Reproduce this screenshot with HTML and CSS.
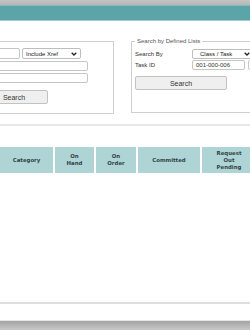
FILE: index.html
```html
<!DOCTYPE html>
<html>
<head>
<meta charset="utf-8">
<link rel="stylesheet" href="styles.css">
</head>
<body>
<div class="topbar"></div>
<div class="titlebar"></div>

<div class="viewport">
<div class="search-row">
  <fieldset class="panel panel-left">
    <legend class="legend-blank"></legend>
    <div class="left-stack">
      <div class="field-row">
        <span class="input input-short"></span>
        <span class="select select-xref"><span class="select-text">Include Xref</span><svg class="chev" viewBox="0 0 6 4" width="6" height="4"><path d="M0.7 0.7 L3 3 L5.3 0.7" fill="none" stroke="#222" stroke-width="1.3"/></svg></span>
      </div>
      <span class="input input-long"></span>
      <span class="input input-long"></span>
      <button class="btn btn-left">Search</button>
    </div>
  </fieldset>

  <fieldset class="panel panel-right">
    <legend>Search by Defined Lists</legend>
    <div class="form-grid right-grid">
      <span class="label">Search By</span>
      <span class="select select-class"><span class="select-text">Class / Task</span><svg class="chev" viewBox="0 0 6 4" width="6" height="4"><path d="M0.7 0.7 L3 3 L5.3 0.7" fill="none" stroke="#222" stroke-width="1.3"/></svg></span>
      <span class="label">Task ID</span>
      <div class="field-row">
        <span class="input input-task">001-000-006</span>
        <span class="input input-mini"></span>
      </div>
    </div>
    <button class="btn btn-right">Search</button>
  </fieldset>
</div>
</div>

<div class="divider"></div>

<div class="table-area">
  <div class="thead">
    <div class="th c1">Category</div>
    <div class="th c2">On<br>Hand</div>
    <div class="th c3">On<br>Order</div>
    <div class="th c4">Committed</div>
    <div class="th c5">Request<br>Out<br>Pending</div>
  </div>
</div>

<div class="footer-line"></div>
<div class="bottombar"></div>
</body>
</html>
```

FILE: styles.css
```css
html, body {
  margin: 0;
  padding: 0;
}
body {
  width: 250px;
  height: 330px;
  overflow: hidden;
  background: #ffffff;
  font-family: "Liberation Sans", Arial, sans-serif;
  color: #333;
  display: flex;
  flex-direction: column;
}
.topbar {
  height: 5px;
  background: linear-gradient(#c4c4c4, #b6b6b6);
  flex: none;
}
.titlebar {
  height: 14px;
  background: #5ba5a9;
  border-top: 1px solid #7fbcbf;
  border-bottom: 1px solid #9dcdd0;
  flex: none;
}
.viewport {
  width: 250px;
  overflow: hidden;
  flex: none;
  margin-top: 17px;
}
.search-row {
  display: flex;
  align-items: flex-start;
  gap: 17px;
  margin-left: -100px;
  width: 450px;
}
.panel {
  margin: 0;
  border: 1px solid #d0d0d0;
  padding: 3px 3px 0 3px;
  min-width: 0;
  flex: none;
  box-sizing: border-box;
}
.panel legend {
  font-size: 6px;
  line-height: 7px;
  color: #555;
  padding: 0 2px;
}
.panel .legend-blank {
  height: 7px;
  padding: 0;
}
.panel-left {
  width: 214px;
  height: 76px;
}
.panel-right {
  width: 210px;
  height: 75px;
}
.left-stack {
  display: flex;
  flex-direction: column;
  align-items: flex-start;
  gap: 2px;
  padding-left: 76px;
}
.form-grid {
  display: grid;
  align-items: center;
}
.right-grid {
  grid-template-columns: 57px auto;
  row-gap: 1px;
  padding-top: 1px;
}
.label {
  font-size: 6px;
  color: #333;
  white-space: nowrap;
}
.field-row {
  display: flex;
  gap: 2px;
  align-items: center;
}
.input {
  display: block;
  box-sizing: border-box;
  height: 10px;
  border: 1px solid #c6c6c6;
  border-radius: 2px;
  background: #fff;
  font-size: 6px;
  line-height: 8px;
  padding: 0 3px;
  color: #333;
}
.input-short { width: 40px; height: 11px; }
.input-long { width: 108px; }
.input-task { width: 53px; }
.input-mini { width: 14px; margin-left: 1px; }
.select {
  display: flex;
  align-items: center;
  justify-content: space-between;
  box-sizing: border-box;
  height: 11px;
  border: 1px solid #bdbdbd;
  border-radius: 2px;
  background: #fff;
  font-size: 6px;
  padding: 0 3px 0 3px;
  color: #222;
}
.select-xref { width: 59px; }
.select-class { width: 62px; height: 10px; padding-left: 7px; }
.chev { flex: none; }
.btn {
  display: block;
  box-sizing: border-box;
  height: 14px;
  border: 1px solid #c2c2c2;
  border-radius: 2px;
  background: #efefef;
  font-family: "Liberation Sans", Arial, sans-serif;
  font-size: 7px;
  color: #333;
  padding: 0;
  text-align: center;
}
.btn-left {
  width: 68px;
  margin-top: 5px;
}
.btn-right {
  width: 92px;
  margin-top: 6px;
}
.divider {
  height: 2px;
  background: #e8e8e8;
  margin-top: 10px;
  flex: none;
}
.table-area {
  margin-top: 21px;
  height: 155px;
  flex: none;
}
.thead {
  display: flex;
  gap: 2px;
  height: 26px;
}
.th {
  background: #afd4d6;
  display: flex;
  align-items: center;
  justify-content: center;
  text-align: center;
  font-family: "DejaVu Sans", Verdana, sans-serif;
  font-weight: bold;
  font-size: 5.4px;
  line-height: 7px;
  color: #2f4445;
  flex: none;
}
.c1 { width: 53px; }
.c2 { width: 39px; }
.c3 { width: 40px; }
.c4 { width: 62px; }
.c5 { width: 54px; }
.footer-line {
  height: 2px;
  background: #dedede;
  flex: none;
}
.bottombar {
  margin-top: 16px;
  height: 9px;
  background: linear-gradient(#a4a4a4, #c8c8c8);
  border-top: 1px solid #e6e6e6;
  flex: none;
}
```
